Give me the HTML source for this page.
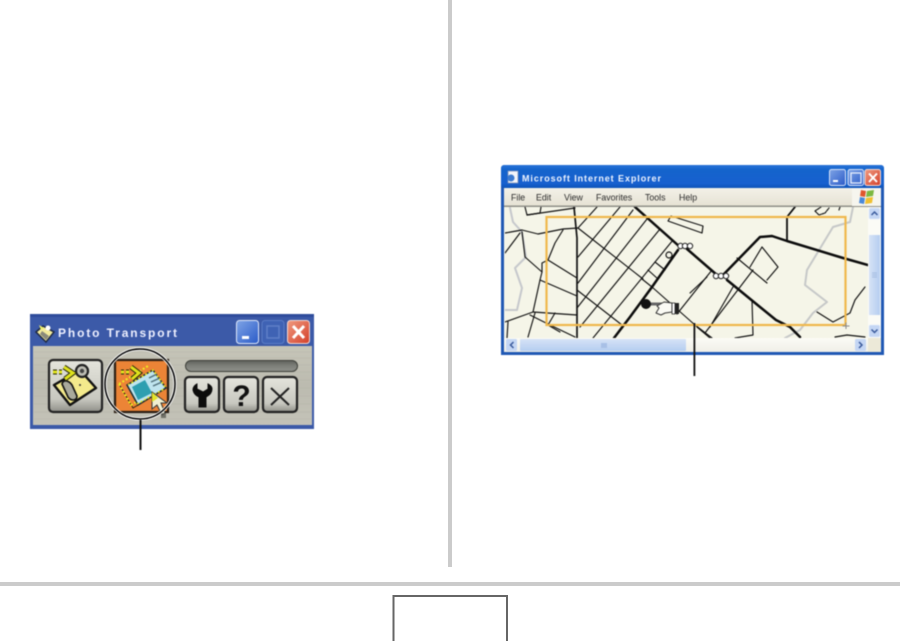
<!DOCTYPE html>
<html>
<head>
<meta charset="utf-8">
<style>
html,body{margin:0;padding:0;background:#fff;width:900px;height:641px;overflow:hidden}
svg{display:block}
text{font-family:"Liberation Sans",sans-serif}
.soft{filter:blur(.4px)}
</style>
</head>
<body>
<svg width="900" height="641" viewBox="0 0 900 641" xmlns="http://www.w3.org/2000/svg">
<defs>
<linearGradient id="pan" x1="0" y1="0" x2="0" y2="1"><stop offset="0" stop-color="#c6c5b8"/><stop offset=".5" stop-color="#bcbbb0"/><stop offset="1" stop-color="#c4c3b8"/></linearGradient>
<linearGradient id="btn" x1="0" y1="0" x2="0" y2="1"><stop offset="0" stop-color="#e4e4dc"/><stop offset=".75" stop-color="#c8c8c0"/><stop offset="1" stop-color="#8f8f88"/></linearGradient>
<linearGradient id="prog" x1="0" y1="0" x2="0" y2="1"><stop offset="0" stop-color="#5f615c"/><stop offset=".5" stop-color="#7e807a"/><stop offset="1" stop-color="#8e908a"/></linearGradient>
<linearGradient id="ietitle" x1="0" y1="0" x2="0" y2="1"><stop offset="0" stop-color="#2a73d8"/><stop offset=".2" stop-color="#1464cc"/><stop offset=".8" stop-color="#1760cf"/><stop offset="1" stop-color="#0e54b8"/></linearGradient>
<linearGradient id="menu" x1="0" y1="0" x2="0" y2="1"><stop offset="0" stop-color="#f3f1e8"/><stop offset="1" stop-color="#e6e2d4"/></linearGradient>
<linearGradient id="hbar" x1="0" y1="0" x2="0" y2="1"><stop offset="0" stop-color="#fbfbf6"/><stop offset="1" stop-color="#f0efe8"/></linearGradient>
<linearGradient id="thumbh" x1="0" y1="0" x2="0" y2="1"><stop offset="0" stop-color="#d6e3f6"/><stop offset="1" stop-color="#b5cdf0"/></linearGradient>
<linearGradient id="thumbv" x1="0" y1="0" x2="1" y2="0"><stop offset="0" stop-color="#d6e3f6"/><stop offset="1" stop-color="#b5cdf0"/></linearGradient>
<linearGradient id="xpb" x1="0" y1="0" x2="1" y2="1"><stop offset="0" stop-color="#7fa4e6"/><stop offset="1" stop-color="#2b5bc8"/></linearGradient>
<linearGradient id="xpr" x1="0" y1="0" x2="1" y2="1"><stop offset="0" stop-color="#ef9a80"/><stop offset="1" stop-color="#d4402a"/></linearGradient>
<clipPath id="mapclip"><rect x="505" y="207" width="363" height="131"/></clipPath>
</defs>

<rect width="900" height="641" fill="#fff"/>
<!-- page furniture -->
<rect x="448" y="0" width="4" height="567" fill="#cbcbcb"/>
<rect x="0" y="582" width="900" height="4" fill="#cbcbcb"/>
<path d="M393.500 641V596H507V641" fill="none" stroke="#666" stroke-width="2"/>

<!-- Photo Transport window -->
<g class="soft">
<rect x="30" y="314" width="284" height="115" fill="#3c5aa8"/>
<rect x="30" y="314" width="284" height="3" fill="#2f4c9c"/>
<rect x="33" y="346" width="279" height="79" fill="url(#pan)"/>
<g stroke="#aeada2" stroke-width=".5" opacity=".6"><path d="M34 352H311M34 358H311M34 365H311M34 372H311M34 380H311M34 388H311M34 396H311M34 404H311M34 412H311M34 419H311"/></g>
<!-- title icon -->
<path d="M36 332L43 326L54 332L46 342Z" fill="#f3ec9c" stroke="#1f2a44" stroke-width="1.500"/>
<path d="M42 331L49 336L46 340L40 334Z" fill="#8a8a7a"/>
<path d="M39 325L44 328L41 330Z" fill="#eef06a"/>
<circle cx="48" cy="328" r="2.500" fill="#fff"/>
<text x="58" y="337" font-size="12" font-weight="bold" fill="#eef0ff" textLength="119" lengthAdjust="spacing">Photo Transport</text>
<!-- caption buttons -->
<rect x="236.500" y="320.500" width="22" height="23" rx="3" fill="url(#xpb)" stroke="#dfe8fa"/>
<rect x="242" y="336" width="7" height="3" fill="#fff"/>
<rect x="262" y="320.500" width="22" height="23" rx="3" fill="#3f62b4" stroke="#5a7cc6"/>
<rect x="267" y="326" width="12" height="12" fill="none" stroke="#5f80c8" stroke-width="1.500"/>
<rect x="287.500" y="320.500" width="22" height="23" rx="3" fill="url(#xpr)" stroke="#f4d8d0"/>
<path d="M293 326L304 338M304 326L293 338" stroke="#fff" stroke-width="3"/>
<!-- camera button -->
<rect x="49" y="360" width="53" height="52" rx="4" fill="url(#btn)" stroke="#222" stroke-width="2.200"/>
<path d="M54 385L80 370L96 388L70 405Z" fill="#f4ea8c" stroke="#111" stroke-width="2.400" stroke-linejoin="round"/>
<path d="M62 384Q63 380 67 381Q70 382 72 385L77 396Q77 400 73 400Q70 400 68 397Z" fill="#a9a99c" stroke="#111" stroke-width="1.600"/>
<circle cx="82" cy="371" r="6" fill="#bdbdb4" stroke="#222" stroke-width="2.200"/>
<circle cx="82" cy="371" r="2.200" fill="#444"/>
<path d="M53 372H57M59 372H62M64 367L73 373L65 379" fill="none" stroke="#26260a" stroke-width="5"/>
<path d="M53 372H57M59 372H62M64 367L73 373L65 379" fill="none" stroke="#dfe21c" stroke-width="3"/>
<circle cx="80" cy="385" r="1" fill="#333"/>
<!-- orange button -->
<rect x="115" y="360" width="53" height="52" fill="#ec8436" stroke="#2a1e14" stroke-width="2.200"/>
<path d="M119 384L148 366" stroke="#f0ee20" stroke-width="2" stroke-dasharray="2 2"/>
<path d="M119 384L133 408L150 398" fill="none" stroke="#26200c" stroke-width="1"/>
<path d="M119 384L131 405L152 393" fill="none" stroke="#f0ee20" stroke-width="2" stroke-dasharray="2 2"/>
<path d="M127 385L153 370L166 388L138 405Z" fill="#bfe4ee" stroke="#1c2a30" stroke-width="1.500"/>
<path d="M132 387L145 380L152 393L138 400Z" fill="#2e9fb0"/>
<path d="M149 378L157 374M151 382L160 378M153 386L162 382" stroke="#50707a" stroke-width="1.500"/>
<path d="M128 385L153 370L166 388" fill="none" stroke="#f0ee20" stroke-width="1.500" stroke-dasharray="2 2"/>
<path d="M137 404L164 389" stroke="#e8ea20" stroke-width="1.500" stroke-dasharray="2 2"/>
<path d="M121 372H124M126 372H129M131 367L139 373L132 379" fill="none" stroke="#26260a" stroke-width="5"/>
<path d="M121 372H124M126 372H129M131 367L139 373L132 379" fill="none" stroke="#dfe21c" stroke-width="3"/>
<path d="M152 392V409L157 405L162 415L165 413L161 403L167 403Z" fill="#f0f0d0" stroke="#333" stroke-width="1"/>
<path d="M152 392V402L158 398Z" fill="#e4e428"/>
<rect x="161" y="413" width="5" height="5" fill="#55554f" opacity=".75"/>
<!-- magnifying circle -->
<circle cx="140" cy="384" r="35" fill="none" stroke="#fff" stroke-width="3.200"/>
<circle cx="140" cy="384" r="35" fill="none" stroke="#000" stroke-width="1.500"/>
<!-- progress -->
<rect x="185.500" y="360.500" width="112" height="11" rx="5.500" fill="url(#prog)" stroke="#3e403a"/>
<!-- small buttons -->
<rect x="185" y="377" width="34" height="35" rx="4" fill="url(#btn)" stroke="#222" stroke-width="2.200"/>
<rect x="224" y="377" width="34" height="35" rx="4" fill="url(#btn)" stroke="#222" stroke-width="2.200"/>
<rect x="263" y="377" width="34" height="35" rx="4" fill="url(#btn)" stroke="#222" stroke-width="2.200"/>
<path d="M197 384Q193 386 193 390Q194 395 199 397V407H206V397Q212 394 212 389Q212 386 208 384V389L203 392L197 389Z" fill="#0c0c0c" stroke="#0c0c0c"/>
<text x="241.500" y="406" font-size="30" font-weight="bold" fill="#111" text-anchor="middle">?</text>
<path d="M271 388L289 405M289 388L271 405" stroke="#222" stroke-width="2"/>
<!-- leader -->
<rect x="139.500" y="420" width="2" height="30" fill="#111"/>
</g>

<!-- IE window -->
<g class="soft">
<path d="M501 355V169Q501 165 505 165H880Q884 165 884 169V355Z" fill="#2058b4"/>
<rect x="501" y="165" width="383" height="23" rx="3" fill="url(#ietitle)"/>
<rect x="504" y="188" width="377" height="164" fill="#f4f4e8"/>
<!-- IE icon -->
<rect x="508" y="171" width="10" height="12" fill="#f4f6fa" stroke="#7a90b8" stroke-width=".8"/>
<circle cx="511" cy="178" r="3.500" fill="#3b7ad0"/>
<text x="522" y="181.500" font-size="9" font-weight="bold" fill="#eef4ff" textLength="139" lengthAdjust="spacing">Microsoft Internet Explorer</text>
<!-- caption -->
<rect x="829.500" y="169.500" width="16" height="16" rx="2" fill="url(#xpb)" stroke="#d8e4fa"/>
<rect x="833" y="180" width="5" height="2" fill="#fff"/>
<rect x="848" y="169.500" width="15.500" height="16" rx="2" fill="url(#xpb)" stroke="#d8e4fa"/>
<rect x="851" y="173" width="10" height="10" fill="none" stroke="#e8eefc" stroke-width="1.300"/>
<rect x="865" y="169.500" width="15.500" height="16" rx="2" fill="url(#xpr)" stroke="#f4d8d0"/>
<path d="M869 173.500L877 182M877 173.500L869 182" stroke="#fff" stroke-width="2"/>
<!-- menu -->
<rect x="504" y="188" width="377" height="18" fill="url(#menu)"/>
<rect x="504" y="205.500" width="377" height="1.500" fill="#8f8f88"/>
<g font-size="8.800" fill="#2a2a2a">
<text x="511" y="200.500">File</text>
<text x="536" y="200.500">Edit</text>
<text x="564" y="200.500">View</text>
<text x="596" y="200.500">Favorites</text>
<text x="645" y="200.500">Tools</text>
<text x="679" y="200.500">Help</text>
</g>
<rect x="852" y="188" width="29" height="18" fill="#f6f5ee"/>
<path d="M861 190L866 191L865 197L860 196Z" fill="#e0562c"/>
<path d="M867 191L874 190L873 196L866 197Z" fill="#7cb840"/>
<path d="M860 197L865 198L864 204L859 203Z" fill="#4a88d8"/>
<path d="M866 198L873 197L872 203L865 204Z" fill="#f0c030"/>

<!-- map -->
<rect x="505" y="207" width="363" height="131" fill="#f5f5e8"/>
<g clip-path="url(#mapclip)" fill="none" stroke-linecap="round" stroke-linejoin="round">
<!-- gray rivers -->
<path d="M510 208L513 222L522 232L526 257L515 268L522 288L517 310L505 310" stroke="#c6c8cc" stroke-width="2"/>
<path d="M853 207L850 222L833 227L807 270L805 285L827 302L813 313L800 330L785 338" stroke="#c6c8c8" stroke-width="2"/>
<!-- thin streets -->
<g stroke="#111" stroke-width="1.150">
<path d="M525 207L527 215L540 213L541 207"/>
<path d="M527 215L575 208"/>
<path d="M505 233L522 230L538 234L563 229L578 228"/>
<path d="M505 253L520 233"/>
<path d="M522 232L525 257L542 272L540 280L533 312L505 322"/>
<path d="M542 272L542 263L548 260"/>
<path d="M563 230L555 243L548 260"/>
<path d="M548 260L577 278"/>
<path d="M540 280L577 296"/>
<path d="M533 312L577 315"/>
<path d="M530 315L550 325L575 337"/>
<path d="M555 313L548 325L560 332"/>
<path d="M508 322L507 338"/>
<path d="M535 313L528 337"/>
<path d="M578 228L597 207"/>
<path d="M578 257L620 207"/>
<path d="M578 283L633 210"/>
<path d="M577 308L647 219"/>
<path d="M580 327L660 229"/>
<path d="M593 338L673 240"/>
<path d="M578 228L643 279"/>
<path d="M577 290L622 325"/>
<path d="M655 262L665 270M648 270L658 279M642 279L652 287"/>
<path d="M652 287L695 325L712 338"/>
<path d="M712 270L677 314"/>
<path d="M753 270L705 333"/>
<path d="M733 287L710 327"/>
<path d="M762 247L750 267"/>
<path d="M762 247L778 267L767 280"/>
<path d="M737 258L767 283"/>
<path d="M752 300L753 335L735 338"/>
<path d="M690 293L707 277"/>
<path d="M697 327L710 338"/>
<path d="M865 287L855 300L850 313L833 322L817 312"/>
<path d="M835 337L847 335L865 337"/>
<path d="M671 216L703 226L702 233L668 221Z"/>
<circle cx="669" cy="255" r="3"/>
<path d="M815 211L821 207M815 211L819 215L825 213L829 208" stroke-dasharray="2 1"/>
<path d="M840 207L839 210"/>
</g>
<path d="M574 207L577 238V338" stroke="#111" stroke-width="1.700"/>
<!-- thick roads -->
<g stroke="#0c0c0c" stroke-width="2.500">
<path d="M635 207L680 247"/>
<path d="M687 249L717 275"/>
<path d="M727 280L760 307L776 320L790 327L800 337" />
<path d="M678 250L652 287L630 317L614 338"/>
<path d="M723 275L760 237L772 236L787 241L843 258L868 265"/>
<path d="M787 241V217L795 207" stroke-width="1.800"/>
</g>
<g stroke="#222" stroke-width="1" fill="#fff">
<circle cx="680.500" cy="246" r="2.700"/><circle cx="685" cy="246" r="2.700"/><circle cx="690" cy="246" r="2.700"/>
<circle cx="716" cy="276" r="2.700"/><circle cx="721" cy="276" r="2.700"/><circle cx="726" cy="276" r="2.700"/>
</g>
<!-- marker -->
<rect x="650" y="302.500" width="12" height="3" fill="#666" stroke="none"/>
<circle cx="646" cy="304" r="5" fill="#111" stroke="none"/>
<path d="M656 313L659 308L657 306L664 302L672 303V312L665 313L661 315Z" fill="#fafaf4" stroke="#333" stroke-width="1"/>
<rect x="672" y="303" width="3" height="11" fill="#fff" stroke="#222" stroke-width=".8"/>
<rect x="675" y="303" width="4" height="11" fill="#222" stroke="none"/>
</g>
<!-- orange frame -->
<rect x="546.500" y="217" width="299" height="108" fill="none" stroke="#f0b84c" stroke-width="2.200"/>
<path d="M846 322.500V329M842.500 326H849.500" stroke="#888" stroke-width="1"/>

<!-- v scrollbar -->
<rect x="868" y="207" width="13" height="131" fill="#fbfbf6"/>
<rect x="869" y="208" width="11" height="11" rx="1.500" fill="#c4d6f4" stroke="#e6eefb" stroke-width=".6"/>
<path d="M871.500 215L874.500 212L877.500 215" fill="none" stroke="#3a5a9c" stroke-width="1.500"/>
<rect x="869" y="235" width="11" height="80" fill="url(#thumbv)"/>
<path d="M872 273H877M872 275H877M872 277H877" stroke="#9ab4dc" stroke-width=".8"/>
<rect x="869" y="325" width="11" height="12" rx="1.500" fill="#c4d6f4" stroke="#e6eefb" stroke-width=".6"/>
<path d="M871.500 329.500L874.500 332.500L877.500 329.500" fill="none" stroke="#3a5a9c" stroke-width="1.500"/>
<!-- h scrollbar -->
<rect x="504" y="338" width="364" height="14" fill="url(#hbar)"/>
<rect x="506" y="339" width="11" height="12" rx="1.500" fill="#c4d6f4"/>
<path d="M513.500 342L510.500 345L513.500 348" fill="none" stroke="#3a5a9c" stroke-width="1.500"/>
<rect x="520" y="339" width="166" height="12" rx="1" fill="url(#thumbh)"/>
<rect x="855" y="339" width="11" height="12" rx="1.500" fill="#c4d6f4"/>
<path d="M859 342L862 345L859 348" fill="none" stroke="#3a5a9c" stroke-width="1.500"/>
<rect x="868" y="338" width="13" height="14" fill="#ece9d8"/>
<rect x="601" y="343" width="6" height="5" fill="#a8c0e6"/>
<!-- leader -->
<rect x="693.500" y="323" width="1.800" height="53" fill="#111"/>
</g>
</svg>
</body>
</html>
